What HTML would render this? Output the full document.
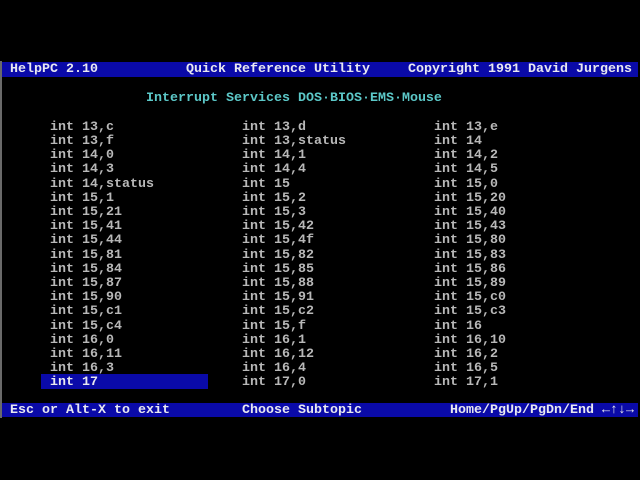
<!DOCTYPE html>
<html><head><style>
body{margin:0;background:#000;width:640px;height:480px;overflow:hidden;position:relative;font-family:"Liberation Mono",monospace;font-size:13.33px;font-weight:bold;color:#b8b8b8}
.r{position:absolute;white-space:pre;line-height:14.2px;transform:translate(2px,2px)}
.bar{position:absolute;left:2px;width:636px;height:14.6px;background:#0a0aa8}
.w{color:#e8e8f0}
.c{color:#5cc8c8}
</style></head><body>
<div style="position:absolute;left:0;top:61px;width:2px;height:357px;background:#6a6a6a"></div>
<div class="bar" style="top:62px"></div>
<div class="bar" style="top:402.8px"></div>
<div style="position:absolute;left:41px;top:374.4px;width:167px;height:14.2px;background:#0a0aa8"></div>
<div class="r w" style="left:8px;top:61px">HelpPC 2.10</div>
<div class="r w" style="left:184px;top:61px">Quick Reference Utility</div>
<div class="r w" style="left:406px;top:61px">Copyright 1991 David Jurgens</div>
<div class="r c" style="left:144px;top:90.4px">Interrupt Services DOS·BIOS·EMS·Mouse</div>
<div class="r" style="left:48px;top:118.8px">int 13,c
int 13,f
int 14,0
int 14,3
int 14,status
int 15,1
int 15,21
int 15,41
int 15,44
int 15,81
int 15,84
int 15,87
int 15,90
int 15,c1
int 15,c4
int 16,0
int 16,11
int 16,3
<span class="w">int 17</span></div>
<div class="r" style="left:240px;top:118.8px">int 13,d
int 13,status
int 14,1
int 14,4
int 15
int 15,2
int 15,3
int 15,42
int 15,4f
int 15,82
int 15,85
int 15,88
int 15,91
int 15,c2
int 15,f
int 16,1
int 16,12
int 16,4
int 17,0</div>
<div class="r" style="left:432px;top:118.8px">int 13,e
int 14
int 14,2
int 14,5
int 15,0
int 15,20
int 15,40
int 15,43
int 15,80
int 15,83
int 15,86
int 15,89
int 15,c0
int 15,c3
int 16
int 16,10
int 16,2
int 16,5
int 17,1</div>
<div class="r w" style="left:8px;top:402px">Esc or Alt-X to exit</div>
<div class="r w" style="left:240px;top:402px">Choose Subtopic</div>
<div class="r w" style="left:448px;top:402px">Home/PgUp/PgDn/End ←↑↓→</div>
</body></html>
